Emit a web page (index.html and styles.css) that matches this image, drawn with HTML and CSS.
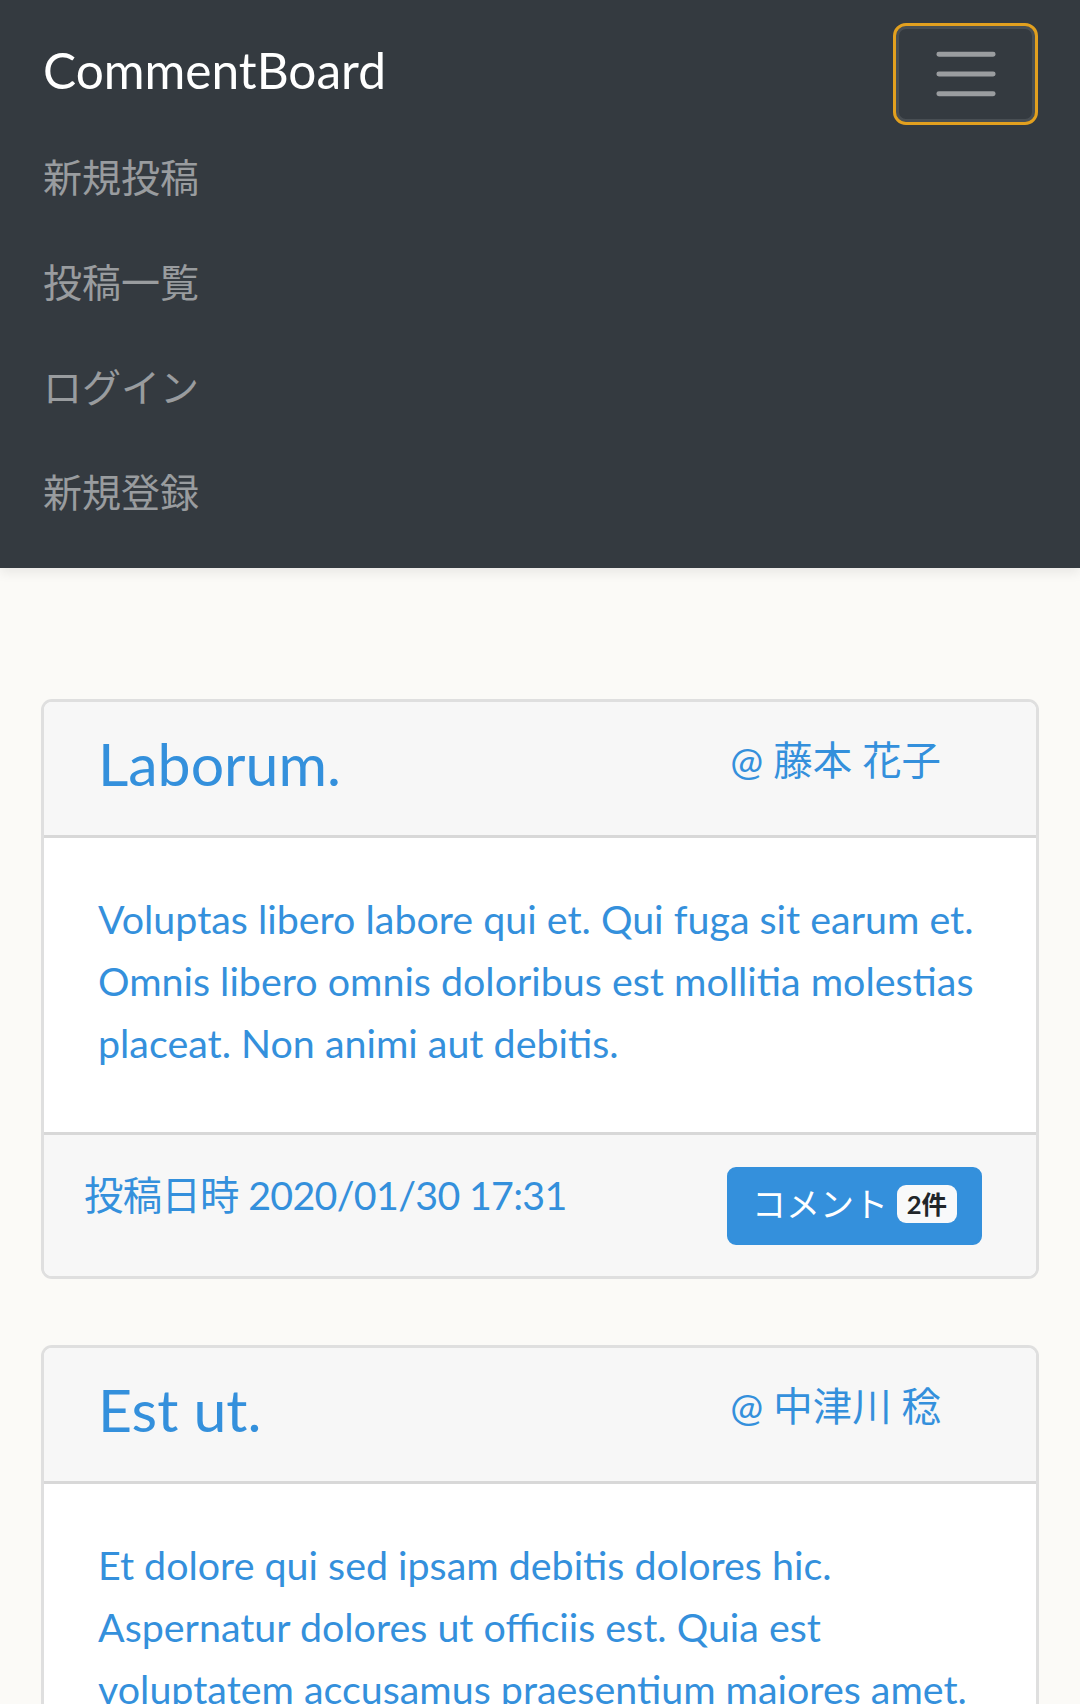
FILE: index.html
```html
<!DOCTYPE html>
<html lang="ja">
<head>
<meta charset="utf-8">
<title>CommentBoard</title>
<link rel="stylesheet" href="styles.css">
</head>
<body>
<nav class="navbar">
  <div class="navbar-top">
    <a class="brand" href="#">CommentBoard</a>
    <button class="toggler" type="button" aria-label="Toggle navigation">
      <svg class="toggler-icon" viewBox="0 0 30 30" width="74" height="74" aria-hidden="true">
        <path d="M4 7h22M4 15h22M4 23h22" fill="none" stroke="rgba(255,255,255,0.5)" stroke-width="2" stroke-linecap="round" stroke-miterlimit="10"/>
      </svg>
    </button>
  </div>
  <ul class="nav-links">
    <li><a class="nav-link" href="#">新規投稿</a></li>
    <li><a class="nav-link" href="#">投稿一覧</a></li>
    <li><a class="nav-link" href="#">ログイン</a></li>
    <li><a class="nav-link" href="#">新規登録</a></li>
  </ul>
</nav>

<main class="container">
  <div class="card">
    <a class="card-link" href="#">
      <div class="card-header">
        <h4 class="card-title">Laborum.</h4>
        <span class="card-author">@ 藤本 花子</span>
      </div>
      <div class="card-body">
        <p class="card-text">Voluptas libero labore qui et. Qui fuga sit earum et. Omnis libero omnis doloribus est mollitia molestias placeat. Non animi aut debitis.</p>
      </div>
    </a>
    <div class="card-footer">
      <span class="card-date">投稿日時 2020/01/30 17:31</span>
      <a class="btn" href="#">コメント <span class="badge">2件</span></a>
    </div>
  </div>

  <div class="card">
    <a class="card-link" href="#">
      <div class="card-header">
        <h4 class="card-title">Est ut.</h4>
        <span class="card-author">@ 中津川 稔</span>
      </div>
      <div class="card-body">
        <p class="card-text">Et dolore qui sed ipsam debitis dolores hic. Aspernatur dolores ut officiis est. Quia est voluptatem accusamus praesentium maiores amet.</p>
      </div>
    </a>
    <div class="card-footer">
      <span class="card-date">投稿日時 2020/01/30 17:31</span>
      <a class="btn" href="#">コメント <span class="badge">0件</span></a>
    </div>
  </div>
</main>
</body>
</html>
```
FILE: styles.css
```css
* {
  box-sizing: border-box;
}

html, body {
  margin: 0;
  padding: 0;
}

body {
  background: #fbfaf7;
  font-family: Lato, "Noto Sans CJK JP", sans-serif;
  font-size: 39.4px;
  line-height: 62px;
  color: #212529;
}

a {
  text-decoration: none;
}

/* ---------- navbar ---------- */
.navbar {
  background: #343a40;
  padding: 22px 45px 24px 43px;
  box-shadow: 0 5px 11px rgba(0, 0, 0, 0.075);
  position: relative;
}

.navbar-top {
  display: flex;
  align-items: center;
  justify-content: space-between;
  height: 102px;
}

.brand {
  color: #fff;
  font-size: 49.6px;
  line-height: 78px;
  padding: 0 0 6px 0;
}

.toggler {
  width: 139px;
  height: 96px;
  padding: 0;
  margin-top: 2px;
  background: transparent;
  border: 3px solid rgba(255, 255, 255, 0.1);
  border-radius: 10px;
  outline: 3px solid #e2a01f;
  outline-offset: 0;
  display: flex;
  align-items: center;
  justify-content: center;
}

.toggler-icon {
  display: block;
  width: 74px;
  height: 74px;
}

.nav-links {
  list-style: none;
  margin: 0;
  padding: 0;
}

.nav-link {
  display: block;
  padding: 21.5px 0;
  font-size: 39px;
  line-height: 62px;
  color: rgba(255, 255, 255, 0.5);
}

/* ---------- content ---------- */
.container {
  padding: 131px 41px 40px;
}

.card {
  background: #fff;
  border: 3px solid rgba(0, 0, 0, 0.125);
  border-radius: 11px;
  margin-bottom: 66px;
  color: #3490dc;
  overflow: hidden;
}

.card-link {
  display: block;
  color: #3490dc;
}

.card-header {
  display: flex;
  align-items: flex-start;
  justify-content: space-between;
  background: #f7f7f7;
  padding: 28px 54px 37px;
  border-bottom: 3px solid rgba(0, 0, 0, 0.125);
}

.card-title {
  margin: 0;
  font-size: 59px;
  font-weight: 400;
  line-height: 68px;
}

.card-author {
  margin: -1px 41px 0 0;
  font-size: 39.4px;
  line-height: 62px;
}

.card-body {
  padding: 50px 54px 58px;
}

.card-text {
  margin: 0;
}

.card-footer {
  display: flex;
  align-items: flex-start;
  justify-content: space-between;
  background: #f7f7f7;
  border-top: 3px solid rgba(0, 0, 0, 0.125);
  padding: 32px 54px 31px 40px;
}

.card-date {
  margin-top: -3px;
  letter-spacing: -0.7px;
  color: #3490dc;
}

.btn {
  display: inline-flex;
  align-items: center;
  height: 78px;
  padding: 0 22px 5px;
  background: #3490dc;
  border: 3px solid #3490dc;
  border-radius: 9px;
  color: #fff;
  font-size: 34px;
  line-height: 52px;
  white-space: pre;
}

.badge {
  display: inline-block;
  padding: 6px 10px;
  background: #f8f9fa;
  color: #212529;
  border-radius: 9px;
  font-size: 25.5px;
  font-weight: 700;
  line-height: 26px;
}
```
